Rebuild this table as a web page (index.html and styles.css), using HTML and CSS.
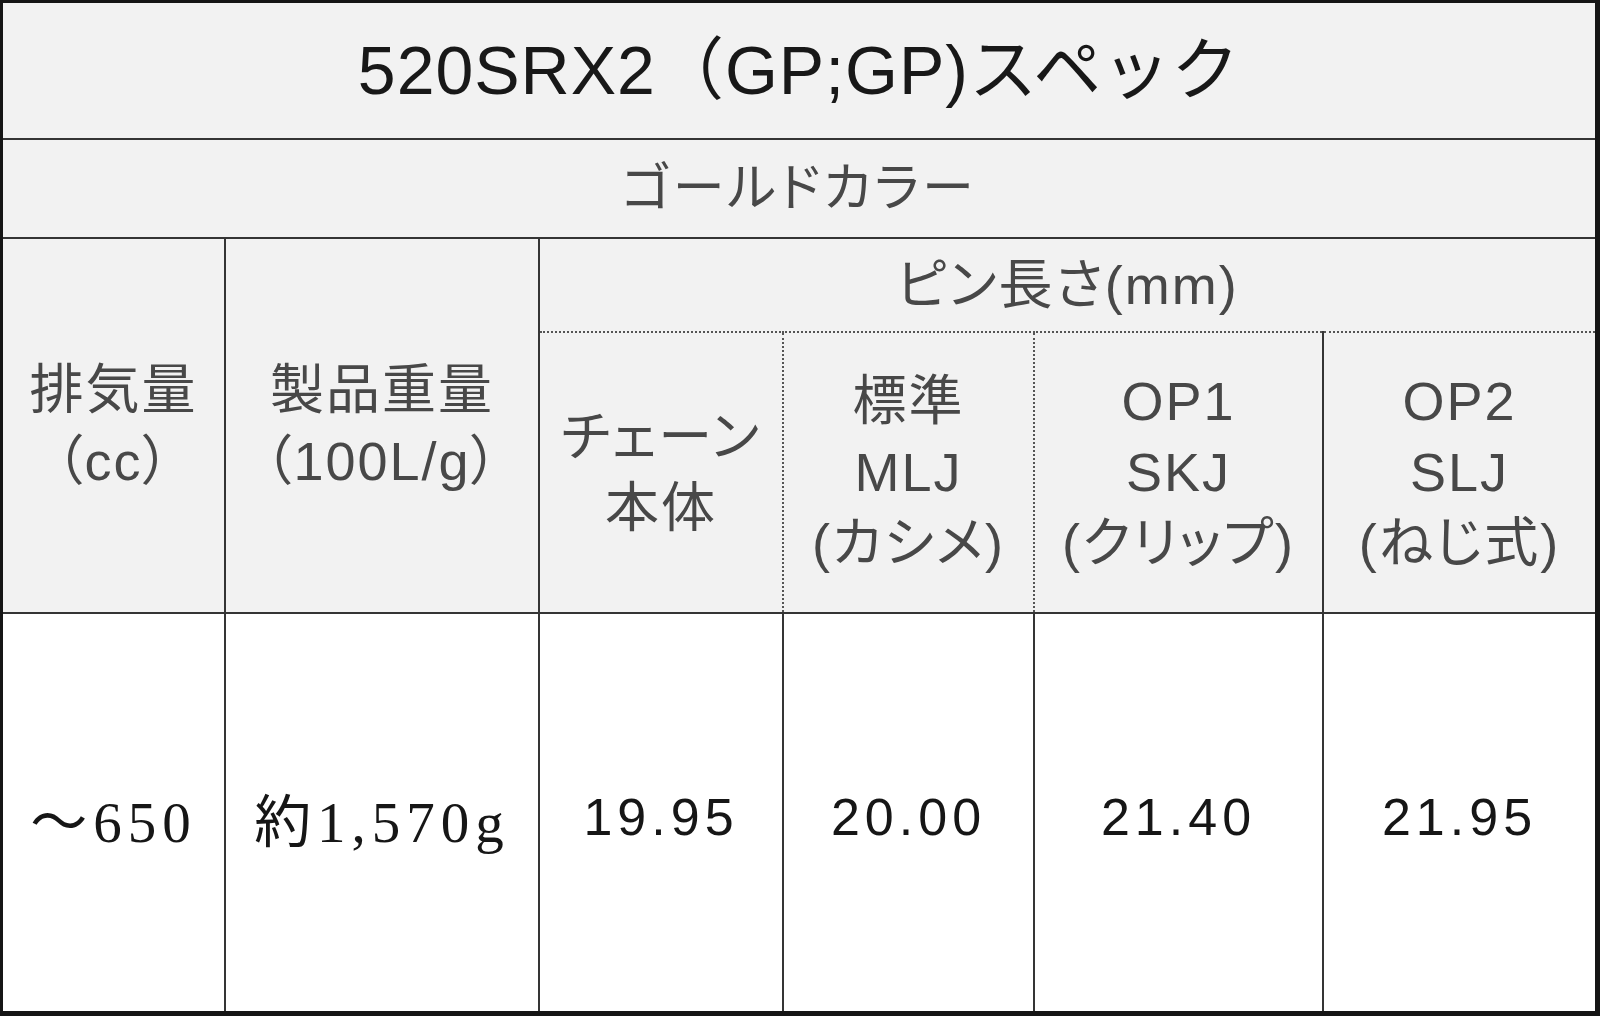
FILE: index.html
```html
<!DOCTYPE html>
<html lang="ja">
<head>
<meta charset="utf-8">
<title>520SRX2（GP;GP)スペック</title>
<link rel="stylesheet" href="styles.css">
</head>
<body>
<div class="frame">
  <table class="spec">
    <colgroup>
      <col class="c1"><col class="c2"><col class="c3"><col class="c4"><col class="c5"><col class="c6">
    </colgroup>
    <tr class="r-title"><th colspan="6" class="title">520SRX2（GP;GP)スペック</th></tr>
    <tr class="r-color"><th colspan="6">ゴールドカラー</th></tr>
    <tr class="r-pin">
      <th rowspan="2">排気量<br>（cc）</th>
      <th rowspan="2">製品重量<br>（100L/g）</th>
      <th colspan="4" class="dot-b">ピン長さ(mm)</th>
    </tr>
    <tr class="r-sub">
      <th class="dot-t dot-r">チェーン<br>本体</th>
      <th class="dot-t dot-l dot-r">標準<br>MLJ<br>(カシメ)</th>
      <th class="dot-t dot-l">OP1<br>SKJ<br>(クリップ)</th>
      <th class="dot-t">OP2<br>SLJ<br>(ねじ式)</th>
    </tr>
    <tr class="r-data">
      <td class="serif">～650</td>
      <td class="serif">約1,570g</td>
      <td>19.95</td>
      <td>20.00</td>
      <td>21.40</td>
      <td>21.95</td>
    </tr>
  </table>
</div>
</body>
</html>
```

FILE: styles.css
```css
html, body {
  margin: 0;
  padding: 0;
  background: #ffffff;
}

.frame {
  box-sizing: border-box;
  width: 1600px;
  height: 1016px;
  border-style: solid;
  border-color: #151515;
  border-width: 3px 5px 5px 3px;
}

.spec {
  width: 1592px;
  height: 1008px;
  table-layout: fixed;
  border-collapse: collapse;
  border-style: hidden;
  font-family: "Liberation Sans", "Noto Sans CJK JP", sans-serif;
}

.c1 { width: 222px; }
.c2 { width: 314px; }
.c3 { width: 244px; }
.c4 { width: 251px; }
.c5 { width: 289px; }
.c6 { width: 272px; }

.spec th,
.spec td {
  border: 2px solid #353535;
  padding: 0;
  text-align: center;
  vertical-align: middle;
}

.spec th {
  background: #f2f2f2;
  font-weight: normal;
  color: #484848;
  font-size: 54px;
  line-height: 71px;
  letter-spacing: 2px;
  font-feature-settings: "palt";
}

.r-title { height: 136px; }
.r-color { height: 99px; }
.r-pin { height: 94px; }
.r-sub { height: 281px; }
.r-data { height: 398px; }

.spec th.title {
  font-size: 68px;
  color: #181818;
  letter-spacing: 1px;
  font-feature-settings: normal;
}

.r-color th {
  font-size: 52px;
  letter-spacing: 3px;
}

.spec .dot-b { border-bottom: 2px dotted #555555; }
.spec .dot-t { border-top: 2px dotted #555555; }
.spec .dot-r { border-right: 2px dotted #555555; }
.spec .dot-l { border-left: 2px dotted #555555; }

.spec td {
  background: #ffffff;
  color: #161616;
  font-size: 52px;
  letter-spacing: 5px;
  padding-top: 8px;
}

.spec td.serif {
  font-family: "Liberation Serif", "Noto Sans CJK JP", serif;
  font-size: 57px;
  letter-spacing: 6px;
}
```
